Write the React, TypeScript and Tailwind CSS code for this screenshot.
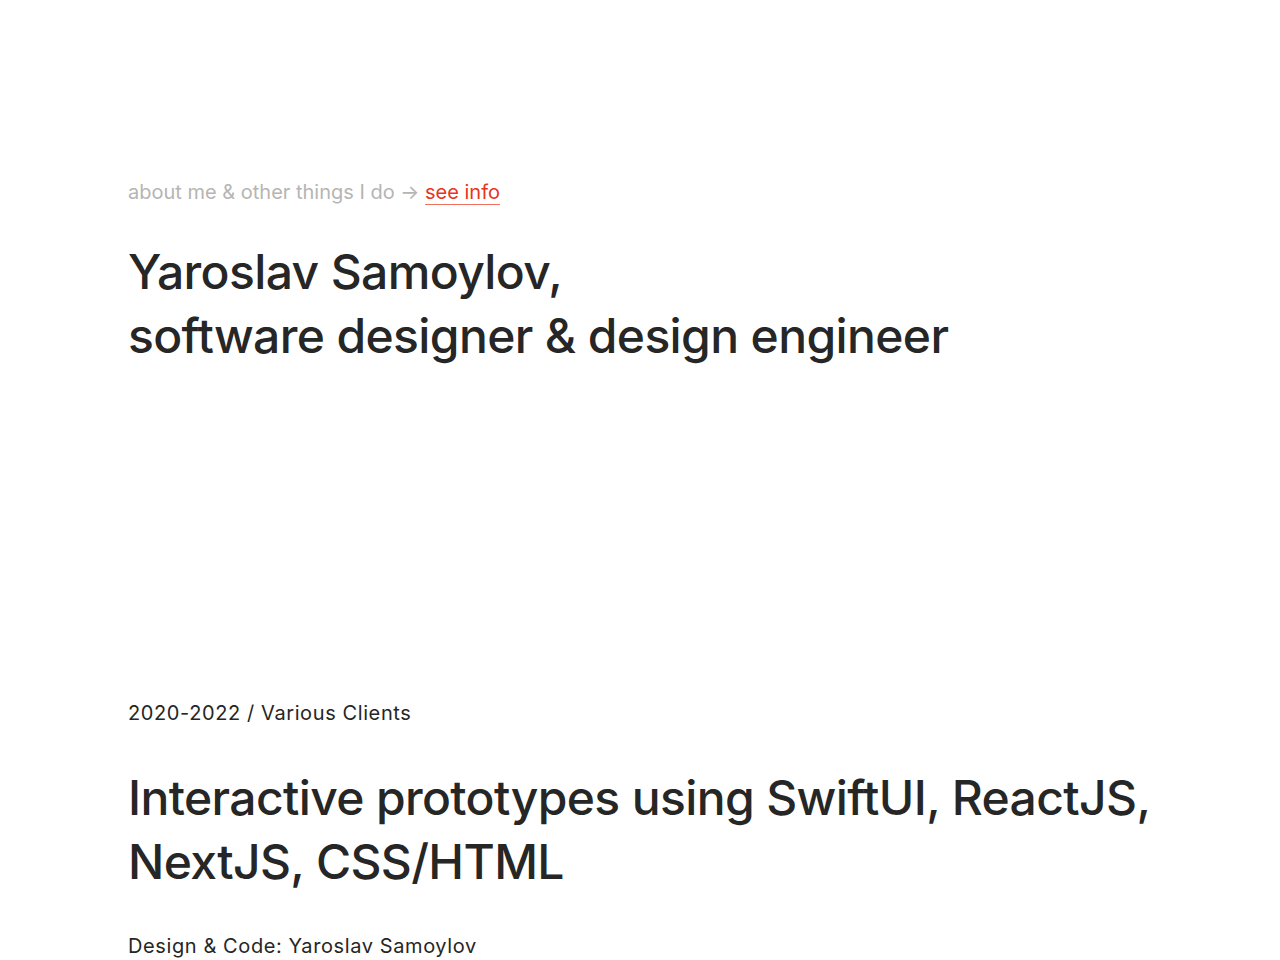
export default function App() {
  return (
    <div className="min-h-screen bg-white text-[#262626]" style={{ fontFamily: "Inter, 'Liberation Sans', sans-serif" }}>
      <div className="px-[128px]">
        {/* Intro */}
        <section className="pt-[176px]">
          <p className="text-[20px] leading-[32px] text-[#b5b5b5]">
            about me &amp; other things I do →{" "}
            <a href="#" className="text-[#e8341c] border-b border-[#e8341c]/70">
              see info
            </a>
          </p>
          <h1 className="mt-[32px] text-[48px] font-[450] leading-[64px] tracking-[-0.013em]">
            Yaroslav Samoylov,
            <br />
            software designer &amp; design engineer
          </h1>
        </section>

        {/* Project */}
        <section className="pt-[329px]">
          <p className="text-[20px] leading-[32px] tracking-[0.03em]">2020-2022 / Various Clients</p>
          <h2 className="mt-[37px] -mr-[24px] text-[48px] font-[450] leading-[64px] tracking-[-0.013em]">
            Interactive prototypes using SwiftUI, ReactJS,
            <br />
            NextJS, CSS/HTML
          </h2>
          <p className="mt-[36px] text-[20px] leading-[32px] tracking-[0.03em]">Design &amp; Code: Yaroslav Samoylov</p>
        </section>
      </div>
    </div>
  );
}
